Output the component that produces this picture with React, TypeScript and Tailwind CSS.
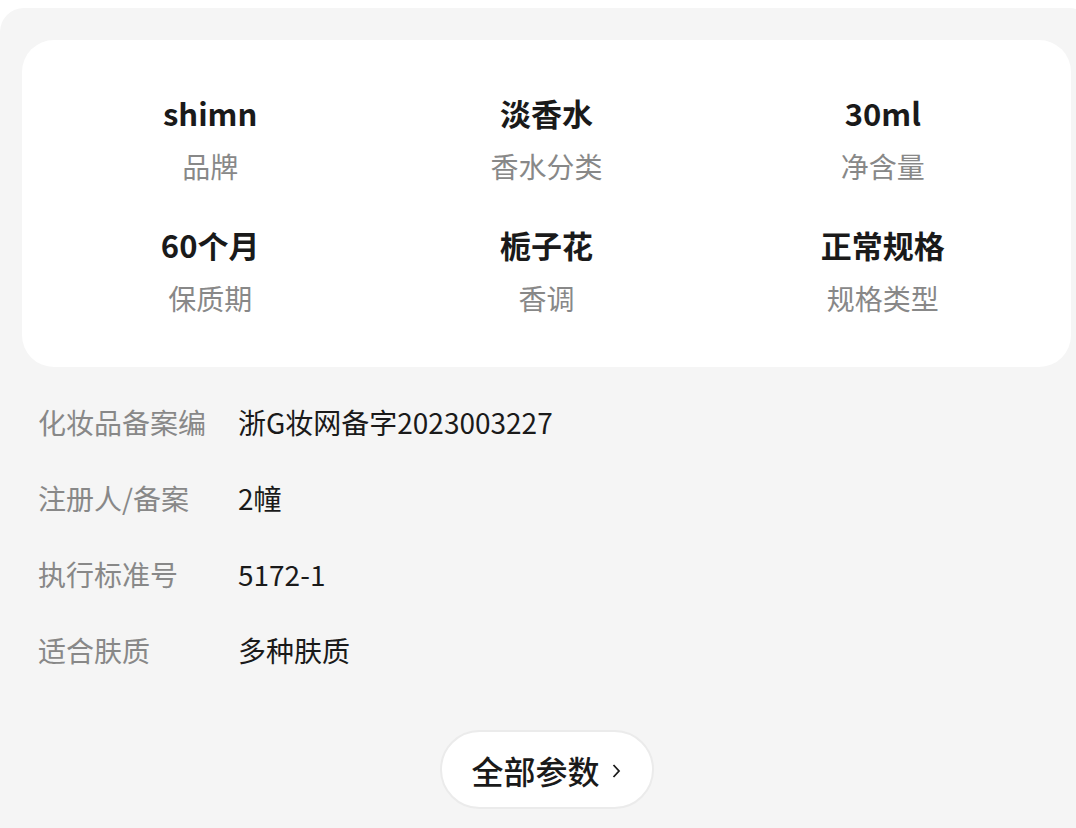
import React from "react";

const font = { fontFamily: '"Noto Sans CJK SC", "Noto Sans", sans-serif' };

const specs = [
  { v: "shimn", l: "品牌" },
  { v: "淡香水", l: "香水分类" },
  { v: "30ml", l: "净含量" },
  { v: "60个月", l: "保质期" },
  { v: "栀子花", l: "香调" },
  { v: "正常规格", l: "规格类型" },
];

const rows = [
  { l: "化妆品备案编", v: "浙G妆网备字2023003227" },
  { l: "注册人/备案", v: "2幢" },
  { l: "执行标准号", v: "5172-1" },
  { l: "适合肤质", v: "多种肤质" },
];

export default function App() {
  return (
    <div className="w-[1076px] h-[828px] overflow-hidden bg-white" style={font}>
      <div className="mt-[8px] w-[1093px] h-[820px] bg-[#f5f5f5] rounded-tl-[24px] rounded-tr-[24px] px-[22px] pt-[32px]">
        <div className="bg-white rounded-[32px] px-[20px] pt-[51px] pb-[49px] grid grid-cols-3 gap-y-[37px]">
          {specs.map((s) => (
            <div key={s.l} className="flex flex-col items-center">
              <div className="text-[31px] leading-[44px] font-bold text-[#1a1a1a]">{s.v}</div>
              <div className="mt-[11px] text-[28px] leading-[40px] text-[#888888]">{s.l}</div>
            </div>
          ))}
        </div>
        <div className="pt-[35px] px-[16px] flex flex-col gap-[36px]">
          {rows.map((r) => (
            <div key={r.l} className="flex text-[28px] leading-[40px]">
              <div className="w-[200px] shrink-0 text-[#888888]">{r.l}</div>
              <div className="text-[#1a1a1a]">{r.v}</div>
            </div>
          ))}
        </div>
        <div className="flex justify-center pt-[60px]">
          <div className="w-[214px] h-[79px] rounded-full bg-white border-2 border-[#ebebeb] flex items-center justify-center gap-[10px]">
            <span className="text-[32px] leading-[44px] font-medium text-[#1a1a1a]">全部参数</span>
            <svg width="12" height="18" viewBox="0 0 12 18" className="mt-[3px]">
              <path d="M3.5 3 L9 9 L3.5 15" fill="none" stroke="#1a1a1a" strokeWidth="1.8" />
            </svg>
          </div>
        </div>
      </div>
    </div>
  );
}
